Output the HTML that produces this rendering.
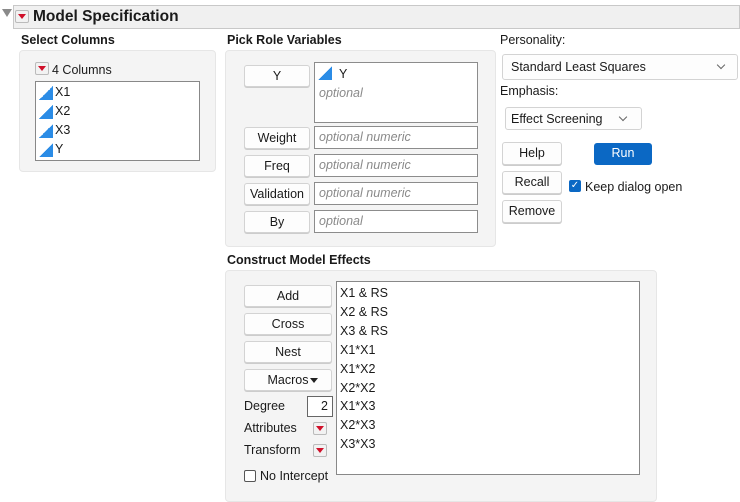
<!DOCTYPE html>
<html><head><style>
body{margin:0;width:740px;height:502px;background:#fff;font-family:"Liberation Sans",sans-serif;font-size:12.5px;color:#1a1a1a;position:relative;overflow:hidden}
div,span{position:absolute;box-sizing:border-box}
.panel{background:#f4f4f4;border:1px solid #e6e6e6;border-radius:4px}
.btn{background:#fdfdfd;border:1px solid #d3d3d3;border-radius:3px;text-align:center;line-height:20px;box-shadow:0 1px 0 #ccc}
.fld{background:#fff;border:1px solid #8c8c8c;color:#8a8a8a;font-style:italic;padding-left:4px;line-height:20px}
.red{width:14px;height:13px;background:#f2f2f2;border:1px solid #bbb;border-radius:2px}
.red:after{content:"";position:absolute;left:2px;top:3px;border-left:4px solid transparent;border-right:4px solid transparent;border-top:5px solid #d0102a}
.tri{width:14px;height:14px;background:linear-gradient(to top left,#2b8ce6 50%,transparent 50%)}
.lbl{white-space:nowrap}
.cb{width:12px;height:12px;border:1px solid #555;border-radius:2px;background:#fff}
.chev{width:6px;height:6px;border-right:1px solid #666;border-bottom:1px solid #666;transform:rotate(45deg)}
</style></head><body>
<div style="left:2px;top:9px;border-left:5px solid transparent;border-right:5px solid transparent;border-top:8px solid #8a8a8a"></div>
<div style="left:13px;top:5px;width:727px;height:24px;background:#f0f0f0;border:1px solid #c8c8c8"></div>
<div class="red" style="left:15px;top:10px"></div>
<div class="lbl" style="left:33px;top:6px;font-size:15.5px;font-weight:bold;line-height:22px">Model Specification</div>

<div class="lbl" style="left:21px;top:33px;font-weight:bold;font-size:12.5px">Select Columns</div>
<div class="panel" style="left:19px;top:50px;width:197px;height:122px"></div>
<div class="red" style="left:35px;top:62px"></div>
<div class="lbl" style="left:52px;top:63px">4 Columns</div>
<div style="left:35px;top:81px;width:165px;height:80px;background:#fff;border:1px solid #888"></div>
<div class="tri" style="left:39px;top:86px"></div><div class="lbl" style="left:55px;top:85px">X1</div>
<div class="tri" style="left:39px;top:105px"></div><div class="lbl" style="left:55px;top:104px">X2</div>
<div class="tri" style="left:39px;top:124px"></div><div class="lbl" style="left:55px;top:123px">X3</div>
<div class="tri" style="left:39px;top:143px"></div><div class="lbl" style="left:55px;top:142px">Y</div>

<div class="lbl" style="left:227px;top:33px;font-weight:bold">Pick Role Variables</div>
<div class="panel" style="left:225px;top:50px;width:271px;height:197px"></div>
<div class="btn" style="left:244px;top:65px;width:66px;height:22px">Y</div>
<div class="btn" style="left:244px;top:127px;width:66px;height:22px">Weight</div>
<div class="btn" style="left:244px;top:155px;width:66px;height:22px">Freq</div>
<div class="btn" style="left:244px;top:183px;width:66px;height:22px">Validation</div>
<div class="btn" style="left:244px;top:211px;width:66px;height:22px">By</div>
<div class="fld" style="left:314px;top:62px;width:164px;height:61px"></div>
<div class="tri" style="left:318px;top:66px"></div><div class="lbl" style="left:339px;top:67px">Y</div>
<div class="lbl" style="left:319px;top:86px;color:#8a8a8a;font-style:italic">optional</div>
<div class="fld" style="left:314px;top:126px;width:164px;height:23px">optional numeric</div>
<div class="fld" style="left:314px;top:154px;width:164px;height:23px">optional numeric</div>
<div class="fld" style="left:314px;top:182px;width:164px;height:23px">optional numeric</div>
<div class="fld" style="left:314px;top:210px;width:164px;height:23px">optional</div>

<div class="lbl" style="left:500px;top:33px">Personality:</div>
<div class="btn" style="left:502px;top:54px;width:236px;height:26px;text-align:left;padding-left:8px;line-height:25px;box-shadow:none">Standard Least Squares<span class="chev" style="left:215px;top:7px"></span></div>
<div class="lbl" style="left:500px;top:84px">Emphasis:</div>
<div class="btn" style="left:505px;top:107px;width:137px;height:23px;text-align:left;padding-left:5px;line-height:22px;box-shadow:none">Effect Screening<span class="chev" style="left:114px;top:6px"></span></div>
<div class="btn" style="left:502px;top:142px;width:60px;height:23px">Help</div>
<div style="left:594px;top:143px;width:58px;height:22px;background:#0b68c4;border-radius:3px;color:#fff;text-align:center;line-height:21px">Run</div>
<div class="btn" style="left:502px;top:171px;width:60px;height:23px">Recall</div>
<div style="left:569px;top:180px;width:12px;height:12px;background:#0b68c4;border-radius:2px;color:#fff;font-size:10px;line-height:12px;text-align:center">&#10003;</div>
<div class="lbl" style="left:585px;top:180px">Keep dialog open</div>
<div class="btn" style="left:502px;top:200px;width:60px;height:23px">Remove</div>

<div class="lbl" style="left:227px;top:253px;font-weight:bold">Construct Model Effects</div>
<div class="panel" style="left:225px;top:270px;width:432px;height:232px"></div>
<div class="btn" style="left:244px;top:285px;width:88px;height:22px">Add</div>
<div class="btn" style="left:244px;top:313px;width:88px;height:22px">Cross</div>
<div class="btn" style="left:244px;top:341px;width:88px;height:22px">Nest</div>
<div class="btn" style="left:244px;top:369px;width:88px;height:22px">Macros<span style="left:65px;top:8px;border-left:4px solid transparent;border-right:4px solid transparent;border-top:5px solid #222"></span></div>
<div class="lbl" style="left:244px;top:399px">Degree</div>
<div style="left:307px;top:396px;width:26px;height:21px;background:#fff;border:1px solid #666;text-align:right;padding-right:4px;line-height:19px">2</div>
<div class="lbl" style="left:244px;top:421px">Attributes</div>
<div class="red" style="left:313px;top:422px"></div>
<div class="lbl" style="left:244px;top:443px">Transform</div>
<div class="red" style="left:313px;top:444px"></div>
<div class="cb" style="left:244px;top:470px"></div>
<div class="lbl" style="left:260px;top:469px">No Intercept</div>
<div style="left:336px;top:281px;width:304px;height:194px;background:#fff;border:1px solid #888"></div>
<div class="lbl" style="left:340px;top:284px;line-height:18.9px">X1 &amp; RS<br>X2 &amp; RS<br>X3 &amp; RS<br>X1*X1<br>X1*X2<br>X2*X2<br>X1*X3<br>X2*X3<br>X3*X3</div>
</body></html>
